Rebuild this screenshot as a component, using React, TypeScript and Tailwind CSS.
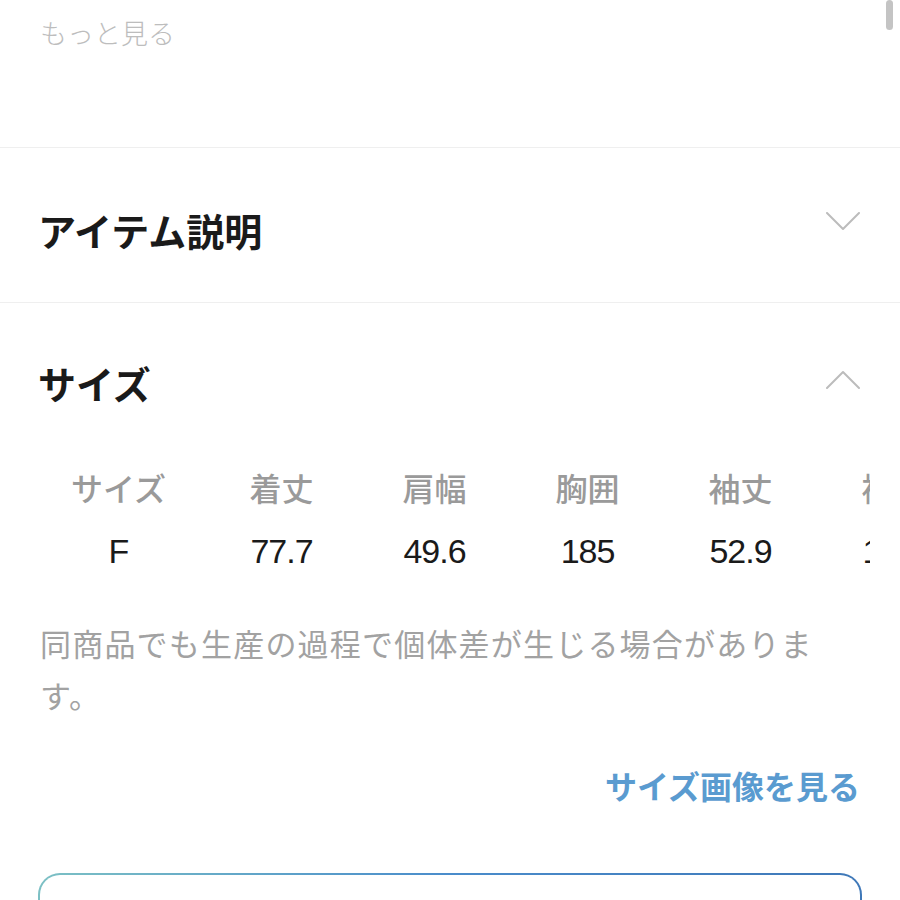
const cols = ['サイズ', '着丈', '肩幅', '胸囲', '袖丈', '裄丈'];
const vals = ['F', '77.7', '49.6', '185', '52.9', '16.5'];

function Chevron({ up }: { up?: boolean }) {
  return (
    <svg width="34" height="19" viewBox="0 0 34 19" fill="none" className="shrink-0">
      <polyline
        points={up ? '1,18 17,2 33,18' : '1,1 17,17 33,1'}
        stroke="#bcbcbc"
        strokeWidth="2"
        strokeLinecap="round"
        strokeLinejoin="round"
      />
    </svg>
  );
}

export default function App() {
  return (
    <div
      className="relative w-[900px] h-[900px] overflow-hidden bg-white"
      style={{ fontFamily: 'Inter, "Noto Sans CJK JP", sans-serif' }}
    >
      <div className="absolute right-[7px] top-0 w-[7px] h-[30px] rounded-full bg-[#c4c4c4]" />

      <div className="h-[148px] border-b border-[#efefef] px-[40px] pt-[16px]">
        <p className="text-[27px] leading-[38px] text-[#bdbdbd] font-light">もっと見る</p>
      </div>

      <div className="h-[155px] border-b border-[#efefef] pl-[38px] pr-[40px] flex items-start justify-between pt-[65px]">
        <h2 className="text-[38px] font-bold text-[#1a1a1a] leading-none">アイテム説明</h2>
        <div className="-mt-[1px]">
          <Chevron />
        </div>
      </div>

      <div className="px-[38px]">
        <div className="flex items-start justify-between pt-[63px] pr-[2px]">
          <h2 className="text-[38px] font-bold text-[#1a1a1a] leading-none">サイズ</h2>
          <div className="mt-[4px]">
            <Chevron up />
          </div>
        </div>

        <div className="w-[832px] overflow-hidden mt-[66px]">
          <div className="flex w-max pl-[4px]">
            {cols.map((c, i) => (
              <div
                key={c}
                className={`w-[153px] shrink-0 flex flex-col items-center ${i === 0 ? 'mr-[10px]' : ''}`}
              >
                <span className="text-[32px] leading-[40px] font-medium text-[#9a9a9a]">{c}</span>
                <span
                  className="mt-[21px] text-[34px] leading-[40px] text-[#1a1a1a] tracking-[-1px]"
                  style={{ fontFamily: '"Liberation Sans", sans-serif' }}
                >
                  {vals[i]}
                </span>
              </div>
            ))}
          </div>
        </div>

        <p className="mt-[48px] w-[800px] text-[31px] leading-[52px] text-[#a2a2a2] tracking-[1.2px] pl-[2px]">
          同商品でも生産の過程で個体差が生じる場合があります。
        </p>

        <div className="flex justify-end mt-[49px] pr-[2px]">
          <span className="text-[32px] font-bold leading-none text-[#5a9bd0]">サイズ画像を見る</span>
        </div>

        <div className="mt-[69px] h-[80px] rounded-[22px] p-[2px] bg-gradient-to-r from-[#7cc0c4] via-[#4a8ccb] to-[#3f78b8]">
          <div className="h-full w-full rounded-[20px] bg-white" />
        </div>
      </div>
    </div>
  );
}
